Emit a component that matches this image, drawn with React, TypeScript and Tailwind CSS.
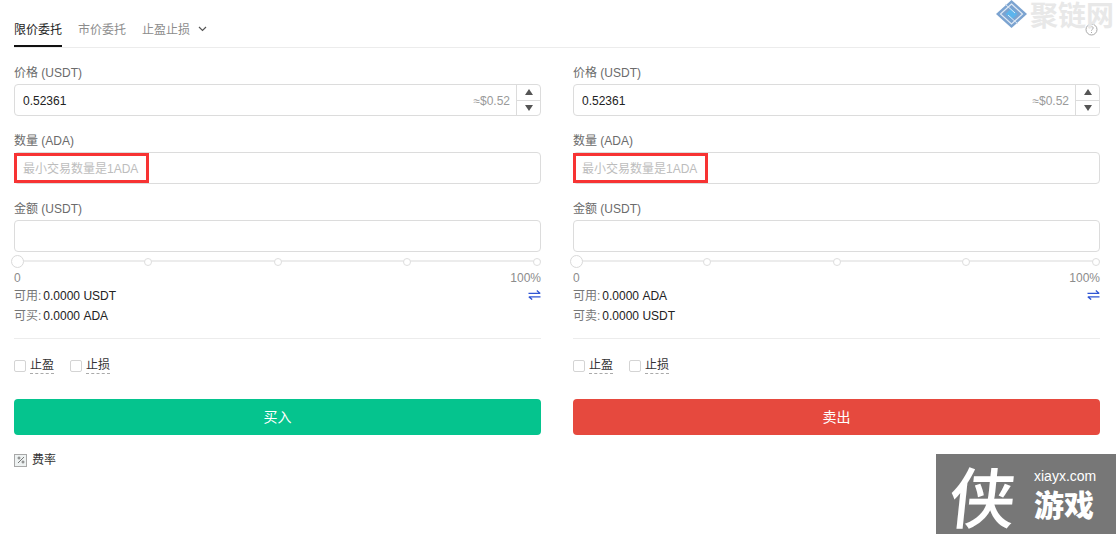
import React from "react";

const FONT = { fontFamily: '"Liberation Sans", "Noto Sans CJK SC", sans-serif' };

function Label({ children }: { children: React.ReactNode }) {
  return <div className="h-[16px] leading-[18px] text-[12px] text-[#6b6b6b] mb-[4px]">{children}</div>;
}

function Box({ children }: { children?: React.ReactNode }) {
  return (
    <div className="relative h-[32px] rounded-[4px] border border-[#dcdcdc] bg-white flex items-center pl-[8px] text-[12px]">
      {children}
    </div>
  );
}

function Field({ label, children, mb }: { label: string; children?: React.ReactNode; mb?: boolean }) {
  return (
    <div className={mb ? "mb-[16px]" : ""}>
      <Label>{label}</Label>
      <Box>{children}</Box>
    </div>
  );
}

function Dot({ big }: { big?: boolean }) {
  return big ? (
    <span className="w-[13px] h-[13px] shrink-0 rounded-full border border-[#d9d9d9] bg-white z-10 -ml-[3px] -mr-[2px]" />
  ) : (
    <span className="w-[8px] h-[8px] shrink-0 rounded-full border border-[#dedede] bg-white z-10" />
  );
}

function Check({ text }: { text: string }) {
  return (
    <div className="flex items-center gap-[4px]">
      <span className="w-[12px] h-[12px] rounded-[2px] border border-[#d4d4d4] bg-white" />
      <span className="text-[12px] leading-[16px] text-[#333] border-b border-dashed border-[#aaa]">{text}</span>
    </div>
  );
}

function Panel({ avail, buyLabel, buyVal, action, color }: { avail: string; buyLabel: string; buyVal: string; action: string; color: string }) {
  return (
    <div className="w-[527px]">
      <Field label="价格 (USDT)" mb>
        <span className="text-[#222] mt-[2px]">0.52361</span>
        <span className="ml-auto mr-[6px] mt-[2px] text-[#9a9a9a]">≈$0.52</span>
        <div className="w-[24px] h-full border-l border-[#dcdcdc] flex flex-col">
          <div className="flex-1 flex items-center justify-center border-b border-[#dcdcdc]">
            <span className="w-0 h-0 border-l-[4px] border-r-[4px] border-b-[6px] border-l-transparent border-r-transparent border-b-[#555]" />
          </div>
          <div className="flex-1 flex items-center justify-center">
            <span className="w-0 h-0 border-l-[4px] border-r-[4px] border-t-[6px] border-l-transparent border-r-transparent border-t-[#555]" />
          </div>
        </div>
      </Field>
      <Field label="数量 (ADA)" mb>
        <span className="text-[#bdbdbd] mt-[2px]">最小交易数量是1ADA</span>
        <span className="absolute -left-px top-0 w-[135px] h-[30px] border-[3px] border-[#f73333]" />
      </Field>
      <Field label="金额 (USDT)" />
      <div className="relative h-[13px] mt-[3px] flex items-center justify-between">
        <span className="absolute left-0 right-0 top-[5px] h-[2px] bg-[#ececec]" />
        <Dot big />
        <Dot />
        <Dot />
        <Dot />
        <Dot />
      </div>
      <div className="flex justify-between h-[16px] leading-[16px] text-[12px] text-[#8c8c8c] mt-[2px]">
        <span>0</span>
        <span>100%</span>
      </div>
      <div className="flex justify-between items-center h-[20px] text-[12px]">
        <span className="text-[#222]">
          <span className="text-[#777] mr-[2px]">可用:</span>
          {avail}
        </span>
        <svg className="mb-[3px]" width="13" height="10" viewBox="0 0 13 10" fill="none" stroke="#2f55d4" strokeWidth="1.3">
          <path d="M0.5 3.4H12.2M8.8 0.6L12.2 3.4" />
          <path d="M12.5 6.8H0.8M4.2 9.6L0.8 6.8" />
        </svg>
      </div>
      <div className="h-[20px] leading-[20px] text-[12px] text-[#222]">
        <span className="text-[#777] mr-[2px]">{buyLabel}</span>
        {buyVal}
      </div>
      <div className="h-px bg-[#ececec] mt-[12px]" />
      <div className="flex gap-[16px] mt-[18px]">
        <Check text="止盈" />
        <Check text="止损" />
      </div>
      <button className="block w-full h-[36px] rounded-[4px] text-white text-[14px] mt-[25px]" style={{ backgroundColor: color }}>
        {action}
      </button>
    </div>
  );
}

export default function App() {
  return (
    <div className="relative w-[1116px] h-[534px] bg-white overflow-hidden" style={FONT}>
      <div className="pl-[14px] pr-[16px]">
        <div className="relative flex items-start h-[48px] border-b border-[#ececec] pt-[22px] text-[12px] leading-[16px]">
          <div className="h-[25px] border-b-2 border-[#111] text-[#222] mr-[16px]">限价委托</div>
          <div className="text-[#8c8c8c] mr-[16px]">市价委托</div>
          <div className="text-[#8c8c8c] flex items-center">
            <span>止盈止损</span>
            <svg className="ml-[8px] -mt-[2px]" width="9" height="6" viewBox="0 0 9 6" fill="none" stroke="#555" strokeWidth="1.2">
              <path d="M1 1L4.5 4.5L8 1" />
            </svg>
          </div>
          <svg className="absolute right-[2px] top-[23px]" width="13" height="13" viewBox="0 0 13 13" fill="none" stroke="#a8a8a8">
            <circle cx="6.5" cy="6.5" r="5.5" />
            <path d="M4.8 5.2C4.8 3 8.2 3 8.2 5.1C8.2 6.2 6.5 6.3 6.5 7.6M6.5 9V10" />
          </svg>
        </div>
        <div className="flex justify-between pt-[16px]">
          <Panel avail="0.0000 USDT" buyLabel="可买:" buyVal="0.0000 ADA" action="买入" color="#05c48e" />
          <Panel avail="0.0000 ADA" buyLabel="可卖:" buyVal="0.0000 USDT" action="卖出" color="#e6493e" />
        </div>
        <div className="flex items-center mt-[17px] text-[12px] leading-[16px] text-[#333]">
          <span className="w-[13px] h-[13px] border border-[#a8a8a8] bg-[#eef2f2] flex items-center justify-center mr-[5px]">
            <svg width="8" height="8" viewBox="0 0 8 8" fill="none" stroke="#777" strokeWidth="1">
              <path d="M1 7L7 1" />
              <circle cx="2" cy="2" r="1" />
              <circle cx="6" cy="6" r="1" />
            </svg>
          </span>
          费率
        </div>
      </div>

      {/* top-right watermark */}
      <div className="absolute left-[996px] top-0 flex items-start pointer-events-none">
        <svg width="31" height="28" viewBox="0 0 31 28">
          <path d="M15.5 0L31 14L15.5 28L0 14Z" fill="#7ba3d0" />
          <path d="M15.5 4L26.5 14L15.5 24L4.5 14Z" fill="none" stroke="#dfe9f4" strokeWidth="1.2" />
          <path d="M15.5 8.5L21.5 14L15.5 19.5L9.5 14Z" fill="#5cb4ec" />
          <path d="M9 4L19 13M22 24L12 15" stroke="#dfe9f4" strokeWidth="1" />
        </svg>
        <span className="ml-[3px] text-[28px] leading-[28px] font-bold text-[#e8e8e8] whitespace-nowrap" style={{ fontFamily: '"Noto Sans CJK SC", serif' }}>
          聚链网
        </span>
      </div>

      {/* bottom-right watermark */}
      <div className="absolute left-[936px] top-[454px] w-[180px] h-[80px] bg-[#777777] flex items-center text-white pointer-events-none" style={{ fontFamily: '"Noto Sans CJK SC", sans-serif' }}>
        <span className="ml-[14px] w-[78px] text-[66px] leading-[76px] font-medium -skew-x-6">侠</span>
        <div className="ml-[6px] flex flex-col items-start">
          <span className="text-[14px] leading-[16px]" style={{ fontFamily: '"Liberation Sans", sans-serif' }}>xiayx.com</span>
          <span className="text-[30px] leading-[34px] font-black mt-[2px]">游戏</span>
        </div>
      </div>
    </div>
  );
}
